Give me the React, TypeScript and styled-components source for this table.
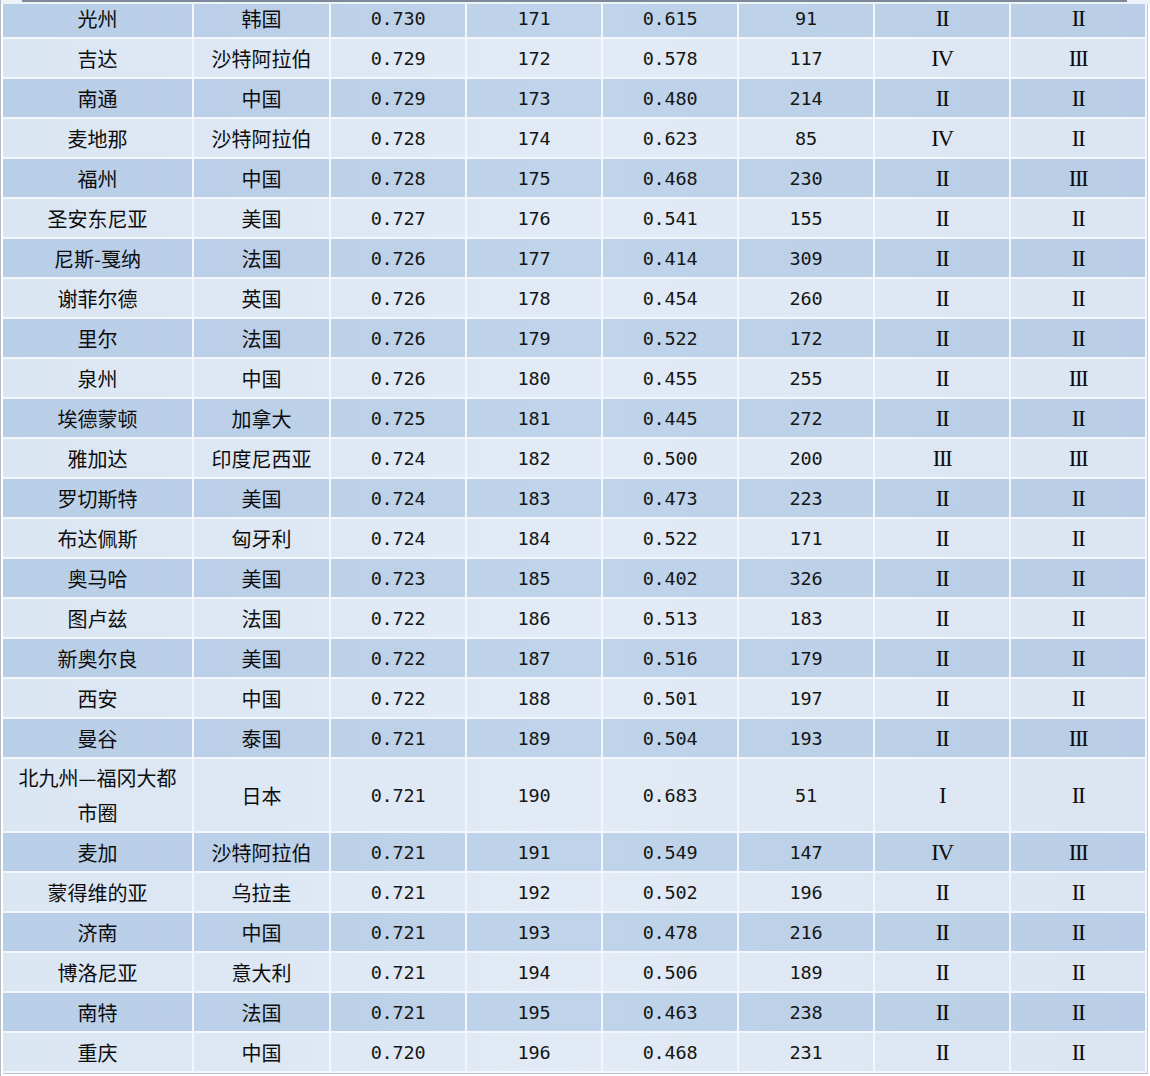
import * as React from "react";
import styled, { createGlobalStyle } from "styled-components";

type Kind = "cjk" | "num" | "roman";

type CityRow = {
    city: string;
    country: string;
    score: string;
    rank: string;
    index: string;
    indexRank: string;
    grade: string;
    level: string;
};

const raw = `光州 韩国 0.730 171 0.615 91 II II
吉达 沙特阿拉伯 0.729 172 0.578 117 IV III
南通 中国 0.729 173 0.480 214 II II
麦地那 沙特阿拉伯 0.728 174 0.623 85 IV II
福州 中国 0.728 175 0.468 230 II III
圣安东尼亚 美国 0.727 176 0.541 155 II II
尼斯-戛纳 法国 0.726 177 0.414 309 II II
谢菲尔德 英国 0.726 178 0.454 260 II II
里尔 法国 0.726 179 0.522 172 II II
泉州 中国 0.726 180 0.455 255 II III
埃德蒙顿 加拿大 0.725 181 0.445 272 II II
雅加达 印度尼西亚 0.724 182 0.500 200 III III
罗切斯特 美国 0.724 183 0.473 223 II II
布达佩斯 匈牙利 0.724 184 0.522 171 II II
奥马哈 美国 0.723 185 0.402 326 II II
图卢兹 法国 0.722 186 0.513 183 II II
新奥尔良 美国 0.722 187 0.516 179 II II
西安 中国 0.722 188 0.501 197 II II
曼谷 泰国 0.721 189 0.504 193 II III
北九州—福冈大都市圈 日本 0.721 190 0.683 51 I II
麦加 沙特阿拉伯 0.721 191 0.549 147 IV III
蒙得维的亚 乌拉圭 0.721 192 0.502 196 II II
济南 中国 0.721 193 0.478 216 II II
博洛尼亚 意大利 0.721 194 0.506 189 II II
南特 法国 0.721 195 0.463 238 II II
重庆 中国 0.720 196 0.468 231 II II`;

const rows: CityRow[] = raw.split("\n").map(line => {
    const [city, country, score, rank, index, indexRank, grade, level] = line.split(" ");
    return { city, country, score, rank, index, indexRank, grade, level };
});

const colWidths = [191, 137, 136, 136, 136, 136, 136, 136];

const GlobalStyle = createGlobalStyle`
html, body {
margin: 0;
padding: 0;
background: #fff;
}
body {
font-family: "Noto Sans CJK SC", "Noto Sans", sans-serif;
}
`;

const Frame = styled.div`
position: relative;
width: 1150px;
height: 1076px;
overflow: hidden;
box-sizing: border-box;
border-left: 1px solid #b4bcc7;
padding-left: 2px;
`;

const TopEdge = styled.div`
position: absolute;
top: 0;
left: 0;
right: 0;
height: 4px;
background: #eef3f8;
`;

const GrayBar = styled.div`
height: 2px;
margin: 0 23px 0 21px;
background: #7d8898;
`;

const Table = styled.table`
width: 1145px;
margin-top: -1px;
table-layout: fixed;
border-collapse: separate;
border-spacing: 0;
border-right: 1px solid #c3cad3;
border-bottom: 1px solid #b9c1cc;
`;

const Row = styled.tr<{ $alt: boolean }>`
background: ${p => (p.$alt
        ? "linear-gradient(90deg, #dbe6f3 0%, #e1eaf5 50%, #dbe5f1 100%)"
        : "linear-gradient(90deg, #b9cee7 0%, #bfd3ea 50%, #b9cde6 100%)")};
`;

const fonts: Record<Kind, string> = {
    cjk: `font-family: "Noto Sans CJK SC", "Noto Sans", sans-serif; font-size: 20px; color: #0d0d0d;`,
    num: `font-family: "DejaVu Sans Mono", "Liberation Mono", monospace; font-size: 18.5px; letter-spacing: -0.2px;`,
    roman: `font-family: "Liberation Serif", "DejaVu Serif", serif; font-size: 23px; letter-spacing: -1.5px; color: #0d0d0d;`,
};

const Cell = styled.td<{ $kind: Kind }>`
box-sizing: border-box;
height: 40px;
padding: 1px 6px;
line-height: 35px;
text-align: center;
vertical-align: middle;
color: #151515;
border-right: 2px solid #f3f6fa;
border-bottom: 2px solid #f3f6fa;
${p => fonts[p.$kind]}
`;

const App: React.FC = () => (
    <>
        <GlobalStyle />
        <Frame>
            <Table>
                <colgroup>
                    {colWidths.map((w, i) => (
                        <col key={i} style={{ width: w }} />
                    ))}
                </colgroup>
                <tbody>
                    {rows.map((r, i) => (
                        <Row key={r.rank} $alt={i % 2 === 1}>
                            <Cell $kind="cjk">{r.city}</Cell>
                            <Cell $kind="cjk">{r.country}</Cell>
                            <Cell $kind="num">{r.score}</Cell>
                            <Cell $kind="num">{r.rank}</Cell>
                            <Cell $kind="num">{r.index}</Cell>
                            <Cell $kind="num">{r.indexRank}</Cell>
                            <Cell $kind="roman">{r.grade}</Cell>
                            <Cell $kind="roman">{r.level}</Cell>
                        </Row>
                    ))}
                </tbody>
            </Table>
            <TopEdge>
                <GrayBar />
            </TopEdge>
        </Frame>
    </>
);

export default App;
